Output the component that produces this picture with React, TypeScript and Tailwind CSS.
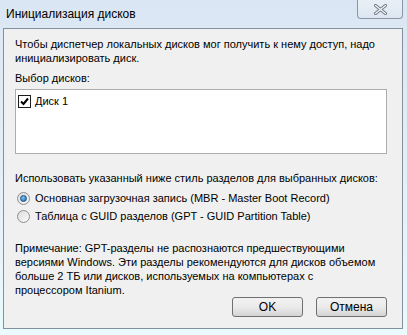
import React from 'react';

function CloseButton() {
  return (
    <div className="absolute left-[357px] top-0 w-[46px] h-[19px] rounded-b-[4px] border border-t-0 border-[#8a96a3] bg-gradient-to-b from-[#eef3f8]/70 to-[#dfe7f0]/70 flex items-center justify-center">
      <svg width="13" height="11" viewBox="0 0 13 11">
        <path d="M1.5 1.5 L11.5 9.5 M11.5 1.5 L1.5 9.5" stroke="#6d7784" strokeWidth="3" strokeLinecap="round" />
        <path d="M1.5 1.5 L11.5 9.5 M11.5 1.5 L1.5 9.5" stroke="#f7f9fb" strokeWidth="1.2" strokeLinecap="round" />
      </svg>
    </div>
  );
}

function Radio({ checked }: { checked?: boolean }) {
  return (
    <span className="w-[13px] h-[13px] rounded-full border border-[#8f8f8f] bg-gradient-to-br from-[#dcdcdc] to-[#fafafa] flex items-center justify-center shrink-0">
      {checked && (
        <span className="w-[7px] h-[7px] rounded-full bg-[radial-gradient(circle_at_40%_35%,#7fc7f5,#1a5fa8)] border border-[#1d4f88]" />
      )}
    </span>
  );
}

function Button({ label }: { label: string }) {
  return (
    <button className="w-[71px] h-[20px] rounded-[3px] border border-[#707070] bg-gradient-to-b from-[#f2f2f2] via-[#ebebeb] to-[#d4d4d4] text-[12px] text-black leading-none flex items-center justify-center">
      {label}
    </button>
  );
}

export default function App() {
  const font = { fontFamily: '"Liberation Sans", Arial, sans-serif' };
  return (
    <div
      className="relative w-[407px] h-[335px] overflow-hidden bg-gradient-to-b from-[#dae6f3] via-[#e4eef8] to-[#e9fbfd]"
      style={font}
    >
      <div className="h-[28px] pl-[6px] flex items-center text-[12px] text-black">
        Инициализация дисков
      </div>
      <CloseButton />

      <div className="ml-[3px] w-[400px] h-[301px] border border-[#84909c] bg-[#f0f0f0] pl-[11px] pr-[15px] pt-[8px] text-[11px] leading-[14px] text-black whitespace-nowrap">
        <p>
          Чтобы диспетчер локальных дисков мог получить к нему доступ, надо
          <br />
          инициализировать диск.
        </p>

        <p className="mt-[6px]">Выбор дисков:</p>
        <div className="mt-[4px] h-[65px] border border-[#abadb3] bg-white pl-[2px] pt-[4px]">
          <div className="flex items-center gap-[4px]">
            <span className="w-[13px] h-[13px] border border-[#1c1c1c] bg-white flex items-center justify-center">
              <svg width="9" height="9" viewBox="0 0 9 9">
                <path d="M1 4.5 L3.5 7 L8 1.5" fill="none" stroke="#000" strokeWidth="2" />
              </svg>
            </span>
            <span>Диск 1</span>
          </div>
        </div>

        <p className="mt-[17px]">Использовать указанный ниже стиль разделов для выбранных дисков:</p>
        <div className="mt-[6px] pl-[2px] flex flex-col gap-[4px]">
          <div className="flex items-center gap-[5px]">
            <Radio checked />
            <span>Основная загрузочная запись (MBR - Master Boot Record)</span>
          </div>
          <div className="flex items-center gap-[5px]">
            <Radio />
            <span>Таблица с GUID разделов (GPT - GUID Partition Table)</span>
          </div>
        </div>

        <p className="mt-[18px]">
          Примечание: GPT-разделы не распознаются предшествующими
          <br />
          версиями Windows. Эти разделы рекомендуются для дисков объемом
          <br />
          больше 2 ТБ или дисков, используемых на компьютерах с
          <br />
          процессором Itanium.
        </p>

        <div className="mt-0 flex justify-end gap-[13px]">
          <Button label="OK" />
          <Button label="Отмена" />
        </div>
      </div>
    </div>
  );
}
